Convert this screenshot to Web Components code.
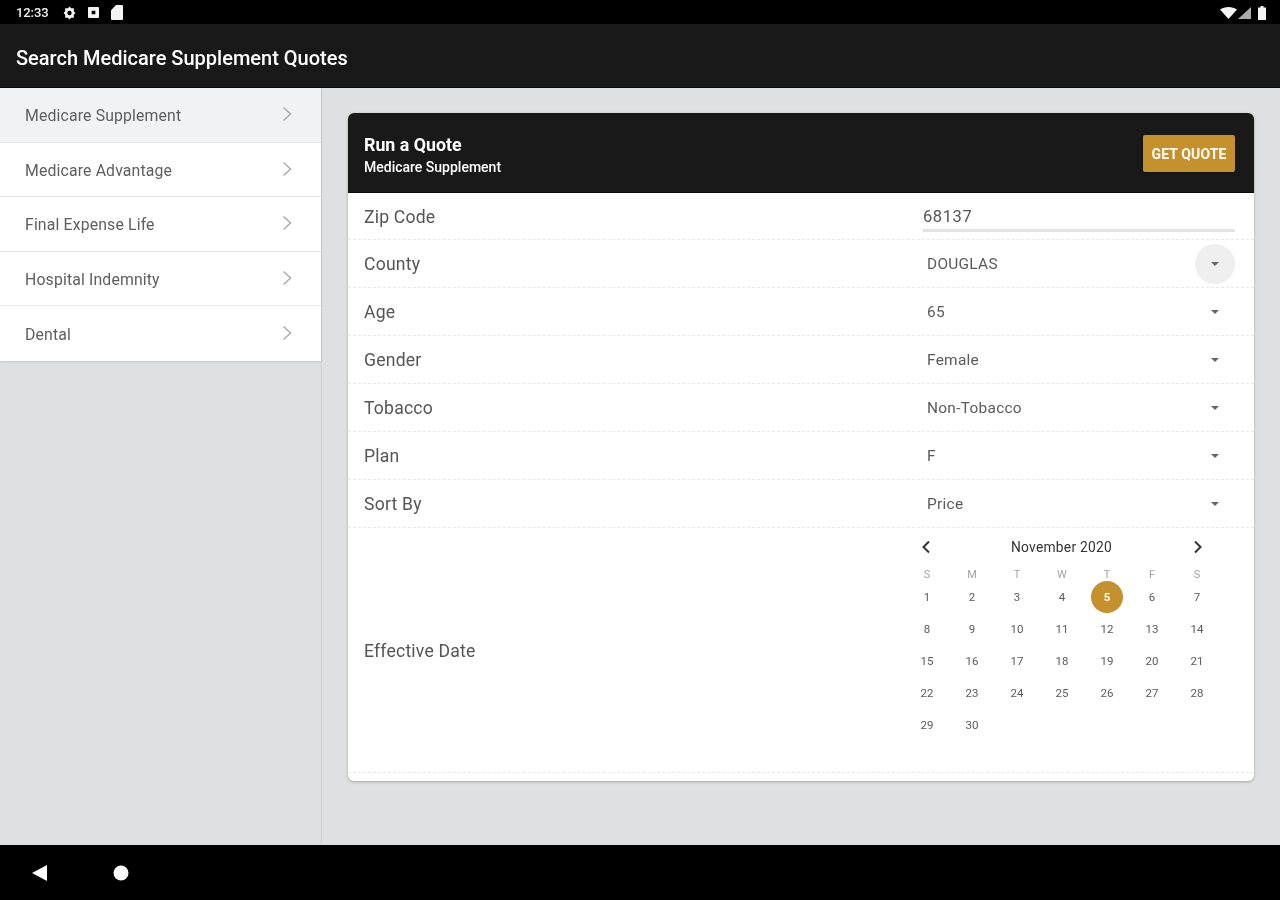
<!DOCTYPE html>
<html lang="en">
<head>
<meta charset="utf-8">
<title>Search Medicare Supplement Quotes</title>
<style>
html,body{margin:0;padding:0;background:#dfe0e3;}
body{width:1280px;height:900px;overflow:hidden;font-family:Roboto,"Liberation Sans",sans-serif;}
</style>
</head>
<body>
<app-shell>
  <status-bar slot="status"></status-bar>
  <app-header slot="header">Search Medicare Supplement Quotes</app-header>
  <side-menu slot="menu">
    <menu-item active>Medicare Supplement</menu-item>
    <menu-item>Medicare Advantage</menu-item>
    <menu-item>Final Expense Life</menu-item>
    <menu-item>Hospital Indemnity</menu-item>
    <menu-item>Dental</menu-item>
  </side-menu>
  <quote-card slot="main">
    <form-row label="Zip Code" h="47"><zip-input>68137</zip-input></form-row>
    <form-row label="County"><select-field focused>DOUGLAS</select-field></form-row>
    <form-row label="Age"><select-field>65</select-field></form-row>
    <form-row label="Gender"><select-field>Female</select-field></form-row>
    <form-row label="Tobacco"><select-field>Non-Tobacco</select-field></form-row>
    <form-row label="Plan"><select-field>F</select-field></form-row>
    <form-row label="Sort By"><select-field>Price</select-field></form-row>
    <form-row label="Effective Date" h="245"><month-calendar></month-calendar></form-row>
  </quote-card>
  <nav-bar slot="nav"></nav-bar>
</app-shell>
<script>
function def(name, css, html, setup){
  customElements.define(name, class extends HTMLElement{
    constructor(){
      super();
      const r=this.attachShadow({mode:"open"});
      r.innerHTML=`<style>${css}</style>${html}`;
    }
    connectedCallback(){ if(setup) setup(this,this.shadowRoot); }
  });
}
def("app-shell",`
  :host{display:grid;grid-template-rows:24px 64px 757px 55px;width:1280px;height:900px;
    font-family:Roboto,"Liberation Sans",sans-serif;filter:blur(.6px);}
  .body{display:flex;min-height:0;background:#dfe0e3;}
  .main{flex:1;padding:25px 26px 0 26px;min-width:0;}
`,`<slot name="status"></slot><slot name="header"></slot>
  <div class="body"><slot name="menu"></slot><div class="main"><slot name="main"></slot></div></div>
  <slot name="nav"></slot>`);

def("status-bar",`
  :host{display:flex;align-items:center;background:#000;color:#f2f2f2;height:24px;padding:1px 14px 0 16px;box-sizing:border-box;}
  .t{font-size:13px;font-weight:500;width:47px;letter-spacing:-.1px;}
  svg{display:block;fill:#f4f4f4;}
  .l{display:flex;align-items:center;flex:1;}
  .r{display:flex;align-items:center;}
`,`<div class="l"><span class="t">12:33</span>
    <svg width="13" height="14" viewBox="0 0 24 24" preserveAspectRatio="none"><path fill-rule="evenodd" d="M12 1l3 3h5v5l3 3-3 3v5h-5l-3 3-3-3H4v-5l-3-3 3-3V4h5zM12 8a4 4 0 100 8 4 4 0 000-8z"/></svg>
    <svg width="11" height="11" viewBox="0 0 12 12" style="margin-left:12px"><path fill-rule="evenodd" d="M1 0h10a1 1 0 011 1v10a1 1 0 01-1 1H1a1 1 0 01-1-1V1a1 1 0 011-1zM4 4v4h4V4z"/></svg>
    <svg width="12" height="15" viewBox="0 0 12 14" preserveAspectRatio="none" style="margin-left:12px"><path d="M5 0h6a1 1 0 011 1v12a1 1 0 01-1 1H1a1 1 0 01-1-1V5z"/></svg>
  </div>
  <div class="r">
    <svg width="17" height="12" viewBox="0 0 17 12"><path d="M0 2.500C2.300.9 5.200 0 8.500 0S14.700.9 17 2.500L8.500 12z"/></svg>
    <svg width="13" height="12" viewBox="0 0 13 12" style="margin:0 7px 0 1px"><path opacity=".7" d="M13 0v12H0z"/></svg>
    <svg width="8" height="14" viewBox="0 0 7 13" preserveAspectRatio="none"><path d="M2.200 0h2.600v1.300H7V13H0V1.300h2.200z"/></svg>
  </div>`);

def("app-header",`
  :host{display:flex;align-items:center;background:#191919;color:#fff;height:64px;padding:5px 16px 0;box-sizing:border-box;
    font-size:20px;font-weight:500;border-bottom:1px solid #0c0c0c;}
`,`<slot></slot>`);

def("side-menu",`
  :host{display:block;width:322px;height:757px;box-sizing:border-box;border-right:1px solid #cfd0d3;flex:none;}
  .list{background:#fff;box-shadow:0 1px 2px rgba(0,0,0,.12);}
`,`<div class="list"><slot></slot></div>`);

def("menu-item",`
  :host{display:flex;align-items:center;justify-content:space-between;height:54.6px;box-sizing:border-box;padding:0 29px 0 25px;
    color:#5e5e5e;font-size:15.800px;letter-spacing:.15px;border-bottom:1px solid #e6e6e8;background:#fff;}
  :host([active]){background:#f1f2f4;}
  :host(:last-child){border-bottom:0;}
  span{padding-top:2px;}
  svg{display:block;margin-top:-1px;}
`,`<span><slot></slot></span><svg width="10" height="16" viewBox="0 0 10 16"><path d="M1.500 1.500L8.500 8l-7 6.500" fill="none" stroke="#ababab" stroke-width="1.500"/></svg>`);

def("quote-card",`
  :host{display:block;width:906px;height:668px;background:#fff;border-radius:6px;box-shadow:0 1px 3px rgba(0,0,0,.28);overflow:hidden;}
  .head{display:flex;align-items:center;justify-content:space-between;height:80px;box-sizing:border-box;background:#191919;
    padding:0 19px 0 16px;color:#fff;border-bottom:1px solid #0a0a0a;}
  .tx{padding-top:6px;}
  .t1{font-size:17.800px;font-weight:700;line-height:20px;}
  .t2{font-size:14px;font-weight:500;line-height:18px;margin-top:3px;}
  .btn{width:92px;height:37px;margin-top:2px;background:#c4912d;border-radius:2px;color:#fff;font-size:14px;font-weight:700;
    display:flex;align-items:center;justify-content:center;letter-spacing:.1px;box-shadow:0 1px 2px rgba(0,0,0,.3);}
`,`<div class="head"><div class="tx"><div class="t1">Run a Quote</div><div class="t2">Medicare Supplement</div></div><div class="btn">GET QUOTE</div></div><slot></slot>`);

def("form-row",`
  :host{display:grid;grid-template-columns:1fr 312px;align-items:center;height:48px;box-sizing:border-box;padding:0 19px 0 16px;
    border-bottom:1px dashed #e8e8e8;}
  .label{color:#555;font-size:17.600px;letter-spacing:.2px;}
  :host([h]) .label{margin-top:2px;}
`,`<div class="label"></div><div class="v"><slot></slot></div>`,(el,r)=>{
  r.querySelector(".label").textContent=el.getAttribute("label");
  if(el.getAttribute("h")) el.style.height=el.getAttribute("h")+"px";
});

def("zip-input",`
  :host{display:block;height:32px;box-sizing:border-box;border-bottom:3px solid #e2e2e2;
    color:#555;font-size:16.500px;letter-spacing:.6px;line-height:34px;}
`,`<slot></slot>`);

def("select-field",`
  :host{display:flex;align-items:center;justify-content:space-between;height:40px;color:#5a5a5a;font-size:15.400px;letter-spacing:.3px;padding-left:4px;}
  .b{width:40px;height:40px;border-radius:50%;display:flex;align-items:center;justify-content:center;}
  :host([focused]) .b{background:#efefef;}
  svg{display:block;}
`,`<span><slot></slot></span><span class="b"><svg width="8" height="4" viewBox="0 0 10 5" preserveAspectRatio="none"><path d="M0 0h10L5 5z" fill="#666"/></svg></span>`);

def("month-calendar",`
  :host{display:block;width:315px;margin-left:-18.500px;color:#444;margin-bottom:22px;}
  .top{display:flex;align-items:center;justify-content:space-between;height:20px;padding:0 17px 0 16px;font-size:13.800px;color:#333;letter-spacing:.25px;}
  svg{display:block;}
  .g{display:grid;grid-template-columns:repeat(7,45px);margin-top:-3px;}
  .w{height:20px;margin-top:7px;color:#a3a3a3;font-size:11px;display:grid;grid-template-columns:repeat(7,45px);text-align:center;align-items:center;}
  .d{height:32px;display:flex;align-items:center;justify-content:center;font-size:11.500px;color:#5a5a5a;}
  .d.today span{width:32px;height:32px;border-radius:50%;background:#c4912d;color:#fff;font-weight:700;display:flex;align-items:center;justify-content:center;}
`,`<div class="top"><svg width="10" height="14" viewBox="0 0 10 14"><path d="M8 1.500L2.500 7 8 12.500" fill="none" stroke="#333" stroke-width="2"/></svg><span>November 2020</span><svg width="10" height="14" viewBox="0 0 10 14"><path d="M2 1.500L7.500 7 2 12.500" fill="none" stroke="#333" stroke-width="2"/></svg></div>
<div class="w"><span>S</span><span>M</span><span>T</span><span>W</span><span>T</span><span>F</span><span>S</span></div><div class="g"></div>`,(el,r)=>{
  const g=r.querySelector(".g");
  for(let i=1;i<=30;i++){
    const c=document.createElement("div");c.className="d"+(i===5?" today":"");
    const s=document.createElement("span");s.textContent=i;c.appendChild(s);g.appendChild(c);
  }
});

def("nav-bar",`
  :host{display:flex;align-items:center;background:#000;height:55px;box-sizing:border-box;padding-left:32px;}
  svg{display:block;fill:#fff;}
`,`<svg width="16" height="16" viewBox="0 0 16 16"><path d="M0 8L15 0v16z"/></svg><svg width="16" height="16" viewBox="0 0 16 16" style="margin-left:65px"><circle cx="8" cy="8" r="7.500"/></svg>`);
</script>
</body>
</html>
